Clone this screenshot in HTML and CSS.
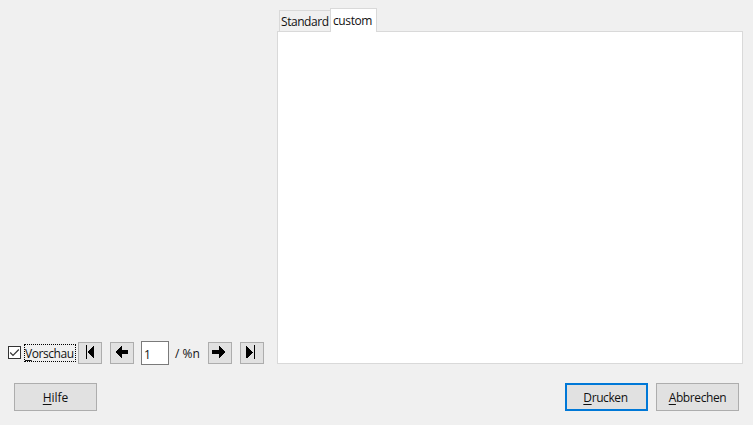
FILE: index.html
```html
<!DOCTYPE html>
<html lang="de">
<head>
<meta charset="utf-8">
<title>Drucken</title>
<link rel="stylesheet" href="styles.css">
</head>
<body>
<main class="dialog">
  <div class="content">
    <section class="preview">
      <div class="check"><svg width="13" height="13" viewBox="0 0 13 13"><path d="M2.2 6.5L5 9.3L10.8 3.5" fill="none" stroke="#333" stroke-width="1.2"/></svg></div>
      <div class="check-label"><span><u>V</u>orschau</span></div>
      <button class="nav first" aria-label="Erste Seite"><svg width="22" height="20" viewBox="0 0 22 20" shape-rendering="crispEdges"><path d="M7 2h1v14H7zM15 3v12h-1v-1h-1v-1h-1v-1h-1v-1h-1v-1H9V8h1V7h1V6h1V5h1V4h1V3z"/></svg></button>
      <button class="nav" aria-label="Vorherige Seite"><svg width="22" height="20" viewBox="0 0 22 20" shape-rendering="crispEdges"><path d="M4 9h1V8h1V7h1V6h1V5h1V4h1V3h1v4h6v4h-6v4h-1v-1H9v-1H8v-1H7v-1H6v-1H5V9z"/></svg></button>
      <div class="page"><span>1</span></div>
      <span class="total">/ %n</span>
      <button class="nav" aria-label="Nächste Seite"><svg width="22" height="20" viewBox="0 0 22 20" shape-rendering="crispEdges"><path d="M17 9h-1V8h-1V7h-1V6h-1V5h-1V4h-1V3h-1v4H3v4h7v4h1v-1h1v-1h1v-1h1v-1h1v-1h1V9z"/></svg></button>
      <button class="nav last" aria-label="Letzte Seite"><svg width="22" height="20" viewBox="0 0 22 20" shape-rendering="crispEdges"><path d="M13 2h1v14h-1zM5 3h1v1h1v1h1v1h1v1h1v1h1v1h1v1h-1v1h-1v1H9v1H8v1H7v1H5z"/></svg></button>
    </section>
    <section class="notebook">
      <div class="tabs">
        <div class="tab"><span>Standard</span></div>
        <div class="tab active"><span>custom</span></div>
      </div>
      <div class="panel"></div>
    </section>
  </div>
  <footer class="actions">
    <button class="action help"><span><u>H</u>ilfe</span></button>
    <button class="action primary"><span><u>D</u>rucken</span></button>
    <button class="action"><span><u>A</u>bbrechen</span></button>
  </footer>
</main>
</body>
</html>
```
FILE: styles.css
```css
* { box-sizing: border-box; }
body {
  margin: 0;
  background: #f0f0f0;
  color: #111;
  font: 12px/16px "Open Sans", "Noto Sans", sans-serif;
  letter-spacing: -0.35px;
}
.dialog {
  display: flex;
  flex-direction: column;
  width: 753px;
  height: 425px;
  padding: 8px 10px 14px 8px;
}
.content { display: flex; height: 356px; }
.preview {
  display: flex;
  align-items: center;
  align-self: flex-end;
  width: 269px;
  height: 24px;
  margin-bottom: -1px;
}
svg { display: block; }
u { text-decoration: underline; text-underline-offset: 2px; text-decoration-thickness: 1px; text-decoration-skip-ink: none; }
.check {
  flex: none;
  width: 13px;
  height: 13px;
  margin-top: -1px;
  background: #fff;
  border: 1px solid #333;
}
.check svg { margin: -1px; }
.check-label {
  flex: none;
  width: 52px;
  height: 18px;
  margin: 0 2px 0 3px;
  padding: 1px 0 0;
  border: 1px dotted #000;
  letter-spacing: -0.45px;
  line-height: 16px;
  white-space: nowrap;
}
.nav {
  flex: none;
  width: 24px;
  height: 22px;
  margin: 0 8px 0 0;
  padding: 0;
  background: #e1e1e1;
  border: 1px solid #adadad;
}
.page {
  width: 28px;
  height: 24px;
  margin-left: -1px;
  padding: 5px 2px 0;
  background: #fff;
  border: 1px solid #7a7a7a;
}
.total { width: 33px; margin-left: 6px; padding-top: 2px; letter-spacing: 0; white-space: nowrap; }
.nav.last { margin-right: 0; }
.notebook { display: flex; flex-direction: column; width: 466px; }
.tabs { display: flex; align-items: flex-end; height: 24px; padding-left: 2px; }
.tab {
  width: 52px;
  height: 22px;
  padding: 3px 0 0 1px;
  border: 1px solid #d9d9d9;
  border-bottom: 0;
  letter-spacing: -0.45px;
  white-space: nowrap;
}
.tab.active {
  z-index: 1;
  width: 47px;
  height: 24px;
  margin-left: -1px;
  padding: 4px 0 0 2px;
  background: #fff;
  letter-spacing: -0.4px;
}
.panel { flex: 1; margin-top: -1px; background: #fff; border: 1px solid #d9d9d9; }
.actions { display: flex; gap: 8px; margin: 19px 4px 0 6px; }
.action {
  width: 83px;
  height: 28px;
  padding: 2px 0 0;
  background: #e1e1e1;
  border: 1px solid #adadad;
  color: #111;
  font: inherit;
  letter-spacing: -0.4px;
}
.help { margin-right: auto; letter-spacing: -0.05px; }
.primary { padding: 1px 2px 0 0; border: 2px solid #0078d7; }
```
